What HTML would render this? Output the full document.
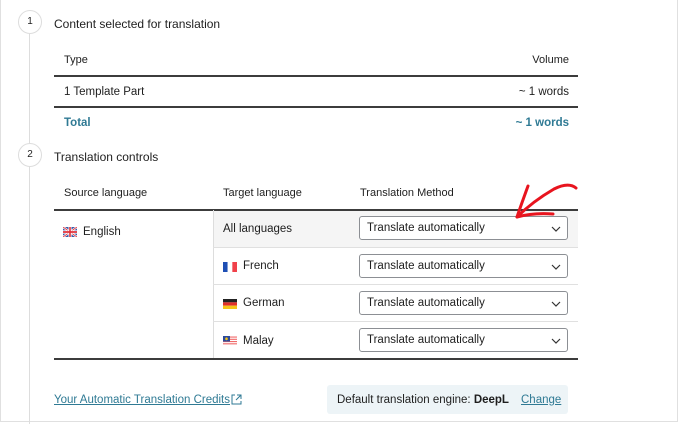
<!DOCTYPE html>
<html><head><meta charset="utf-8"><style>
*{box-sizing:border-box;margin:0;padding:0}
body{width:680px;height:423px;background:#fff;font-family:"Liberation Sans",sans-serif;font-size:11px;color:#1e1e1e;position:relative;overflow:hidden}
.frame{position:absolute;left:0;top:-2px;width:678px;height:424px;border:1px solid #e0e0e0;border-top:none}
.line{position:absolute;left:29px;top:34px;width:1px;height:390px;background:#ddd}
.circ{position:absolute;left:18px;width:24px;height:24px;border-radius:50%;border:1px solid #ddd;background:#fff;text-align:center;line-height:22px;font-size:10px}
.t{position:absolute;font-size:11.5px}
.h{font-size:11px}
.hl{position:absolute;left:54px;width:524px;height:2px;background:#3c3c3c}
.ll{position:absolute;height:1px;background:#e0e0e0}
.sel{position:absolute;left:359px;width:209px;height:24px;border:1px solid #8c8f94;border-radius:3px;background:#fff;padding-left:7px;line-height:23px;font-size:11.5px}
.sel svg{position:absolute;right:6px;top:9px}
.flag{position:absolute;width:14px;height:10px}
</style></head><body>
<div class="frame"></div>
<div class="line"></div>
<div class="circ" style="top:10px">1</div>
<div class="circ" style="top:143px">2</div>
<div class="t" style="left:54px;top:17px;font-size:12px">Content selected for translation</div>
<div class="t h" style="left:64px;top:54px">Type</div>
<div class="t h" style="right:111px;top:54px">Volume</div>
<div class="hl" style="top:75px"></div>
<div class="t" style="left:64px;top:86px">1 Template Part</div>
<div class="t" style="right:111px;top:86px">~ 1 words</div>
<div class="hl" style="top:106px"></div>
<div class="t" style="left:64px;top:117px;color:#2f7a94;font-weight:bold">Total</div>
<div class="t" style="right:111px;top:117px;color:#2f7a94;font-weight:bold">~ 1 words</div>
<div class="t" style="left:54px;top:150px;font-size:12px">Translation controls</div>
<div class="t h" style="left:64px;top:187px">Source language</div>
<div class="t h" style="left:223px;top:187px">Target language</div>
<div class="t h" style="left:360px;top:187px">Translation Method</div>
<div style="position:absolute;left:213px;top:210px;width:365px;height:37px;background:#f5f5f5"></div>
<div class="hl" style="top:209px"></div>
<div style="position:absolute;left:213px;top:210px;width:1px;height:149px;background:#ddd"></div>
<div class="ll" style="left:213px;width:365px;top:247px"></div>
<div class="ll" style="left:213px;width:365px;top:284px"></div>
<div class="ll" style="left:213px;width:365px;top:321px"></div>
<div class="hl" style="top:358px"></div>
<svg class="flag" style="left:63px;top:227px" viewBox="0 0 14 9" preserveAspectRatio="none"><rect width="14" height="9" fill="#3b5aa8"/><path d="M0 0L14 9M14 0L0 9" stroke="#fff" stroke-width="2"/><path d="M0 0L14 9M14 0L0 9" stroke="#e0303a" stroke-width=".8"/><path d="M7 0V9M0 4.5H14" stroke="#fff" stroke-width="3"/><path d="M7 0V9M0 4.5H14" stroke="#e0303a" stroke-width="1.6"/></svg>
<div class="t" style="left:83px;top:226px">English</div>
<div class="t" style="left:223px;top:223px">All languages</div>
<svg class="flag" style="left:223px;top:262px" viewBox="0 0 3 2" preserveAspectRatio="none"><rect width="1" height="2" fill="#1e4fb4"/><rect x="1" width="1" height="2" fill="#fff"/><rect x="2" width="1" height="2" fill="#f0414a"/></svg>
<div class="t" style="left:243px;top:260px">French</div>
<svg class="flag" style="left:223px;top:299px" viewBox="0 0 3 3" preserveAspectRatio="none"><rect width="3" height="1" fill="#222"/><rect y="1" width="3" height="1" fill="#e0302a"/><rect y="2" width="3" height="1" fill="#f5c518"/></svg>
<div class="t" style="left:243px;top:297px">German</div>
<svg class="flag" style="left:223px;top:336px" viewBox="0 0 14 9" preserveAspectRatio="none"><rect width="14" height="9" fill="#fff"/><path d="M0 1H14M0 3H14M0 5H14M0 7H14" stroke="#f06a6a" stroke-width="1"/><rect width="7" height="5" fill="#2b4a9c"/><circle cx="3.5" cy="2.5" r="1.3" fill="#f5c518"/></svg>
<div class="t" style="left:243px;top:335px">Malay</div>
<div class="sel" style="top:216px">Translate automatically<svg width="10" height="6"><path d="M1 1l4 4 4-4" fill="none" stroke="#333" stroke-width="1.2"/></svg></div>
<div class="sel" style="top:254px">Translate automatically<svg width="10" height="6"><path d="M1 1l4 4 4-4" fill="none" stroke="#333" stroke-width="1.2"/></svg></div>
<div class="sel" style="top:291px">Translate automatically<svg width="10" height="6"><path d="M1 1l4 4 4-4" fill="none" stroke="#333" stroke-width="1.2"/></svg></div>
<div class="sel" style="top:328px">Translate automatically<svg width="10" height="6"><path d="M1 1l4 4 4-4" fill="none" stroke="#333" stroke-width="1.2"/></svg></div>
<svg style="position:absolute;left:510px;top:180px" width="70" height="45" viewBox="0 0 70 45"><path d="M66 8C60 3 52 5 44 9C32 16 18 26 7 37" fill="none" stroke="#e8141e" stroke-width="3" stroke-linecap="round"/><path d="M18 6C14 17 10 28 7 37C18 34 30 33 43 34" fill="none" stroke="#e8141e" stroke-width="3" stroke-linecap="round" stroke-linejoin="round"/></svg>
<div class="t" style="left:54px;top:394px;color:#2f7a94;text-decoration:underline">Your Automatic Translation Credits</div>
<svg style="position:absolute;left:231px;top:394px" width="11" height="11" viewBox="0 0 11 11"><path d="M4 1H1V10H10V7M6 1H10V5M10 1L5 6" fill="none" stroke="#2f7a94" stroke-width="1"/></svg>
<div style="position:absolute;left:327px;top:385px;width:241px;height:29px;background:#edf4f7;border-radius:3px"></div>
<div class="t" style="left:337px;top:394px">Default translation engine: <b>DeepL</b></div>
<div class="t" style="left:521px;top:394px;color:#2f7a94;text-decoration:underline">Change</div>
</body></html>
